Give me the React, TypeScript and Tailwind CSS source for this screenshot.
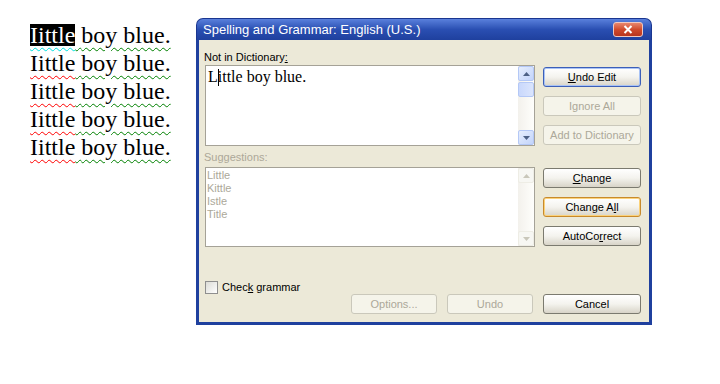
import React from "react";

const ui = "font-['Liberation_Sans',Arial,sans-serif] text-[11px] leading-[13px]";

function Btn({
  children,
  kind = "normal",
  className = "",
}: {
  children: React.ReactNode;
  kind?: "normal" | "default" | "hot" | "disabled";
  className?: string;
}) {
  const look = {
    normal:
      "border-[#7b7a6f] bg-gradient-to-b from-white via-[#f4f3ee] to-[#d8d4c8] text-black",
    default:
      "border-[#3c5fb8] bg-gradient-to-b from-white via-[#f4f3ee] to-[#d8d4c8] text-black shadow-[inset_0_0_0_1px_#a9c3f5]",
    hot: "border-[#c88a2c] bg-gradient-to-b from-white via-[#f4f3ee] to-[#d8d4c8] text-black shadow-[inset_0_0_0_1px_#fbd27a]",
    disabled: "border-[#cac8bb] bg-[#f5f4ea] text-[#aca899]",
  }[kind];
  return (
    <div
      className={`flex h-[20px] items-center justify-center rounded-[3px] border ${look} ${className}`}
    >
      {children}
    </div>
  );
}

function Arrow({ up, color }: { up: boolean; color: string }) {
  return (
    <svg width="7" height="4" viewBox="0 0 7 4">
      <polygon points={up ? "3.5,0 7,4 0,4" : "0,0 7,0 3.5,4"} fill={color} />
    </svg>
  );
}

function ScrollBar({ enabled }: { enabled: boolean }) {
  const btn = enabled
    ? "border-[#b4c8f6] bg-gradient-to-br from-[#e6eefc] to-[#c3d4fb]"
    : "border-[#eeede5] bg-[#f7f7f3]";
  const arrow = enabled ? "#4d6185" : "#c9c7ba";
  return (
    <div className="flex w-[16px] flex-col bg-gradient-to-r from-[#f3f1ec] to-[#fefefb]">
      <div className={`flex h-[15px] items-center justify-center rounded-[2px] border ${btn}`}>
        <Arrow up color={arrow} />
      </div>
      {enabled ? (
        <div className="mt-px h-[15px] rounded-[2px] border border-[#b4c8f6] bg-gradient-to-r from-[#c9d8fc] to-[#dbe5fd]" />
      ) : null}
      <div className="flex-1" />
      <div className={`flex h-[15px] items-center justify-center rounded-[2px] border ${btn}`}>
        <Arrow up={false} color={arrow} />
      </div>
    </div>
  );
}

function DocLine({ first }: { first?: boolean }) {
  return (
    <div className="whitespace-nowrap">
      {first ? (
        <span className="inline-block h-[22px] bg-black leading-[22px] text-white underline decoration-[#00e0e0] decoration-wavy decoration-1 underline-offset-[4px]">
          Iittle
        </span>
      ) : (
        <span className="underline decoration-[#ff0000] decoration-wavy decoration-1 underline-offset-[4px]">
          Iittle
        </span>
      )}
      <span className="underline decoration-[#008000] decoration-wavy decoration-1 underline-offset-[4px]">
        {" "}boy blue.
      </span>
    </div>
  );
}

export default function App() {
  return (
    <div className="flex h-[384px] w-[720px] bg-white">
      <div className="w-[196px] pl-[30px] pt-[21px] font-['Liberation_Serif','Times_New_Roman',serif] text-[24px] leading-[28px] text-black">
        <DocLine first />
        <DocLine />
        <DocLine />
        <DocLine />
        <DocLine />
      </div>

      <div className="mt-[18px] flex h-[307px] w-[456px] flex-col">
        <div className="flex h-[22px] items-center justify-between rounded-t-[7px] border-x border-t border-[#1a3690] bg-gradient-to-b from-[#5a80dc] via-[#2a4fb2] to-[#1f409e] pl-[6px] pr-[8px]">
          <span className="font-['Liberation_Sans',Arial,sans-serif] text-[13px] leading-none text-white">
            Spelling and Grammar: English (U.S.)
          </span>
          <div className="flex h-[15px] w-[30px] items-center justify-center rounded-[3px] border border-[#f0c8c0] bg-gradient-to-b from-[#e8866c] via-[#d04a2c] to-[#b8351e]">
            <svg width="10" height="9" viewBox="0 0 10 9">
              <path d="M1.5 1 L8.5 8 M8.5 1 L1.5 8" stroke="white" strokeWidth="2" />
            </svg>
          </div>
        </div>

        <div className={`flex flex-1 flex-col border-x-[3px] border-b-[3px] border-[#1f409e] bg-[#ece9d8] pt-[11px] pb-[5px] pl-[6px] pr-[8px] ${ui}`}>
          <div className="flex">
            <div className="w-[330px]">
              <div className="-ml-px text-black">
                Not in Dictionary<span className="underline">:</span>
              </div>
              <div className="mt-px flex h-[81px] border border-[#a5a297] bg-white">
                <div className="flex-1 pl-[2px] pt-[2px] font-['Liberation_Serif','Times_New_Roman',serif] text-[16px] leading-[18px] text-black">
                  L
                  <span className="-mr-px inline-block h-[17px] w-px bg-black align-[-4px]" />
                  ittle boy blue.
                </div>
                <ScrollBar enabled />
              </div>

              <div className="-ml-px mt-[5px] text-[#aca899]">Suggestions:</div>
              <div className="mt-[3px] flex h-[80px] border border-[#a5a297] bg-white">
                <div className="flex-1 pl-px pt-px text-[#aca899]">
                  <div>Little</div>
                  <div>Kittle</div>
                  <div>Istle</div>
                  <div>Title</div>
                </div>
                <ScrollBar enabled={false} />
              </div>
            </div>

            <div className="ml-[8px] flex w-[98px] flex-col pt-[16px]">
              <div className="flex flex-col gap-[9px]">
                <Btn kind="default">
                  <span>
                    <span className="underline">U</span>ndo Edit
                  </span>
                </Btn>
                <Btn kind="disabled">Ignore All</Btn>
                <Btn kind="disabled">Add to Dictionary</Btn>
              </div>
              <div className="mt-[23px] flex flex-col gap-[9px]">
                <Btn>
                  <span>
                    <span className="underline">C</span>hange
                  </span>
                </Btn>
                <Btn kind="hot">
                  <span>
                    Change A<span className="underline">l</span>l
                  </span>
                </Btn>
                <Btn>
                  <span>
                    AutoCo<span className="underline">r</span>rect
                  </span>
                </Btn>
              </div>
            </div>
          </div>

          <div className="mt-[34px] flex items-center gap-[4px] text-black">
            <div className="h-[13px] w-[13px] border border-[#8f8f8f] bg-gradient-to-br from-[#dcdcd7] to-white" />
            <span>
              Chec<span className="underline">k</span> grammar
            </span>
          </div>

          <div className="flex justify-end gap-[10px]">
            <Btn kind="disabled" className="w-[86px]">
              Options...
            </Btn>
            <Btn kind="disabled" className="w-[86px]">
              Undo
            </Btn>
            <Btn className="w-[98px]">Cancel</Btn>
          </div>
        </div>
      </div>
    </div>
  );
}
